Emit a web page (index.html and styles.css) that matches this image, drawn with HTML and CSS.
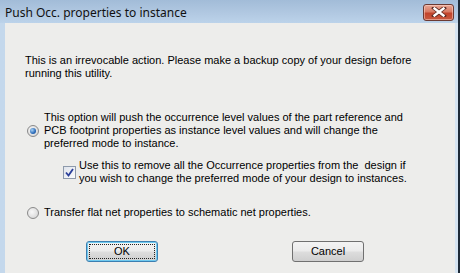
FILE: index.html
```html
<!DOCTYPE html>
<html>
<head>
<meta charset="utf-8">
<link rel="stylesheet" href="styles.css">
</head>
<body>
<div class="window">
  <div class="titlebar">
    <span class="title">Push Occ. properties to instance</span>
    <div class="close">
      <svg width="16" height="10" viewBox="0 0 16 10">
        <path d="M3 1 L13 9 M13 1 L3 9" stroke="#5a2a22" stroke-width="4" stroke-linecap="square"/>
        <path d="M3.5 1.5 L12.5 8.5 M12.5 1.5 L3.5 8.5" stroke="#ffffff" stroke-width="2.4" stroke-linecap="square"/>
      </svg>
    </div>
  </div>
  <div class="frame">
    <div class="client">
      <p class="intro">This is an irrevocable action. Please make a backup copy of your design before<br>running this utility.</p>
      <div class="option opt1">
        <span class="radio checked"><span class="dot"></span></span>
        <p>This option will push the occurrence level values of the part reference and<br>PCB footprint properties as instance level values and will change the<br>preferred mode to instance.</p>
      </div>
      <div class="option sub">
        <span class="check">
          <svg width="9" height="9" viewBox="0 0 9 9"><path d="M1 4.5 L3.5 7.5 L8 1" fill="none" stroke="#2a3f9a" stroke-width="1.8"/></svg>
        </span>
        <p>Use this to remove all the Occurrence properties from the&nbsp; design if<br>you wish to change the preferred mode of your design to instances.</p>
      </div>
      <div class="option opt2">
        <span class="radio"></span>
        <p>Transfer flat net properties to schematic net properties.</p>
      </div>
      <div class="buttons">
        <div class="btn ok"><span class="focus">OK</span></div>
        <div class="btn cancel">Cancel</div>
      </div>
    </div>
  </div>
</div>
</body>
</html>
```
FILE: styles.css
```css
html, body {
  margin: 0;
  padding: 0;
}
body {
  width: 460px;
  height: 273px;
  overflow: hidden;
  font-family: "Liberation Sans", Arial, sans-serif;
}
.window {
  width: 458px;
  height: 273px;
  display: flex;
  flex-direction: column;
  background: #bdd3e8;
  border-right: 2px solid #1d2a38;
}
.titlebar {
  height: 23px;
  flex: none;
  display: flex;
  align-items: center;
  justify-content: space-between;
  background: linear-gradient(#a2bcd8, #b2c9e2 60%, #bcd3ea);
  padding: 0 4px 0 5px;
}
.title {
  font-family: "Noto Sans", sans-serif;
  font-size: 12px;
  color: #111;
  margin-top: 2px;
}
.close {
  width: 29px;
  height: 15px;
  margin-top: 1px;
  border: 1px solid #6b3a33;
  border-radius: 3px;
  background: linear-gradient(#e8a795 0%, #d87a63 45%, #c2432b 55%, #c85a40 100%);
  box-shadow: inset 0 0 0 1px rgba(255,220,210,0.5);
  display: flex;
  align-items: center;
  justify-content: center;
}
.close svg { display: block; }
.frame {
  flex: 1;
  display: flex;
  padding: 0 3px 0 5px;
  background: linear-gradient(90deg, #c4d8ec, #d5e4f2);
}
.client {
  flex: 1;
  background: #ededeb;
  padding: 31px 0 0 20px;
  font-size: 11px;
  line-height: 13px;
  color: #000;
}
p {
  margin: 0;
  white-space: nowrap;
}
.option {
  display: flex;
  align-items: center;
}
.opt1 {
  margin-top: 31px;
}
.radio {
  width: 10px;
  height: 10px;
  border-radius: 50%;
  border: 1px solid #8a8a8a;
  background: radial-gradient(circle at 40% 40%, #f8f8f8, #d0d0d0);
  margin: 0 5px 0 2px;
  flex: none;
  display: flex;
  align-items: center;
  justify-content: center;
}
.radio .dot {
  width: 6px;
  height: 6px;
  border-radius: 50%;
  background: radial-gradient(circle at 35% 35%, #a9d3f5, #2a6ab8 60%, #1a4f91);
}
.sub {
  margin-top: 9px;
  padding-left: 38px;
}
.check {
  width: 11px;
  height: 11px;
  border: 1px solid #8e9aab;
  background: linear-gradient(135deg, #dfe4ec, #fbfbfc);
  margin-right: 3px;
  flex: none;
  display: flex;
  align-items: center;
  justify-content: center;
}
.opt2 {
  margin-top: 21px;
}
.buttons {
  display: flex;
  margin-top: 22px;
  padding-left: 61px;
  gap: 134px;
}
.btn {
  width: 70px;
  height: 19px;
  border: 1px solid #707070;
  border-radius: 3px;
  background: linear-gradient(#f3f3f3 0%, #ebebeb 48%, #dddddd 52%, #cfcfcf 100%);
  display: flex;
  align-items: center;
  justify-content: center;
  font-size: 11px;
}
.btn.ok {
  border-color: #3c7fb1;
  box-shadow: inset 0 0 0 1px #6fcaf0;
}
.btn.ok .focus {
  width: 64px;
  height: 13px;
  border: 1px dotted #222;
  display: flex;
  align-items: center;
  justify-content: center;
}
```
